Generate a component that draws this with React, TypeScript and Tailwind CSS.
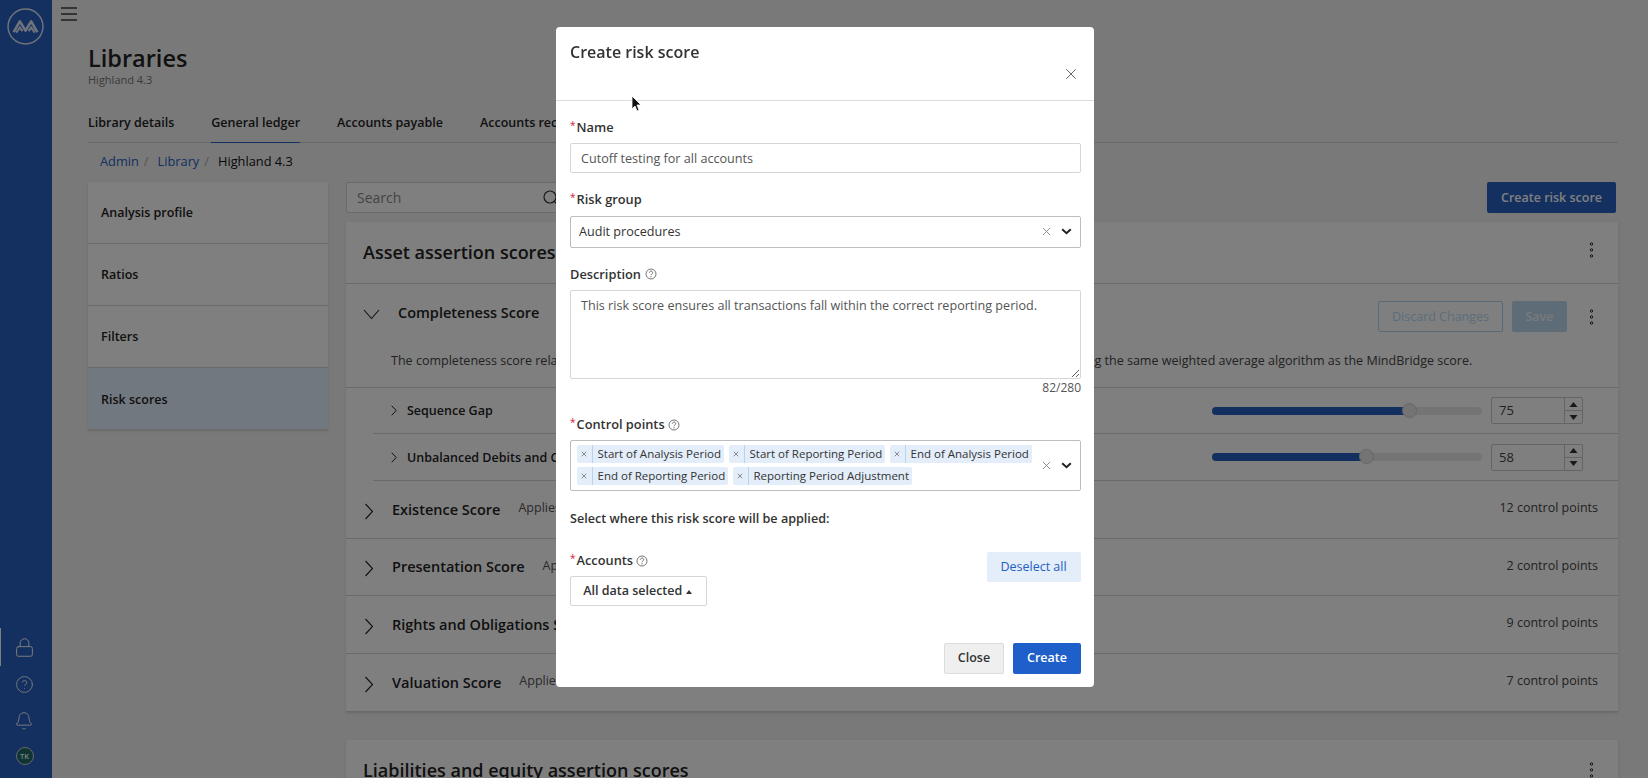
import React from "react";
import { Lock, CircleHelp, Bell, X } from "lucide-react";

const Chev = ({ dir, size }: { dir: "down" | "right"; size: "lg" | "sm" }) => {
  if (dir === "down")
    return (
      <svg width="17" height="11" viewBox="0 0 17 11" fill="none" stroke="#222" strokeWidth="1.1">
        <path d="M1 1l7.5 8.5L16 1" />
      </svg>
    );
  return size === "lg" ? (
    <svg width="10" height="17" viewBox="0 0 10 17" fill="none" stroke="#222" strokeWidth="1.1">
      <path d="M1.5 1l7 7.5-7 7.5" />
    </svg>
  ) : (
    <svg width="6" height="11" viewBox="0 0 6 11" fill="none" stroke="#222" strokeWidth="1">
      <path d="M.7 .7l4.5 4.8-4.5 4.8" />
    </svg>
  );
};

const Kebab = () => (
  <svg width="5" height="16" viewBox="0 0 5 16" fill="none" stroke="#222" strokeWidth="1">
    <circle cx="2.5" cy="2" r="1.2" />
    <circle cx="2.5" cy="8" r="1.2" />
    <circle cx="2.5" cy="14" r="1.2" />
  </svg>
);

const Help = () => (
  <svg width="12" height="12" viewBox="0 0 12 12" fill="none" stroke="#555" strokeWidth=".8">
    <circle cx="6" cy="6" r="5" />
    <path d="M4.4 4.7c0-2.1 3.3-2.1 3.3 0 0 1.2-1.7 1.2-1.7 2.6" />
    <circle cx="6" cy="8.9" r=".25" />
  </svg>
);

const Req = () => <span className="text-[#d4213d] text-[10px] font-normal relative top-[-3px] mr-[1px]">*</span>;

const SelectCtl = () => (
  <div className="flex items-center w-[41px] shrink-0">
    <X size={13} strokeWidth={1.5} className="text-[#777] ml-[1px]" />
    <svg width="11" height="7" viewBox="0 0 11 7" className="ml-[8px]" fill="none" stroke="#222" strokeWidth="2">
      <path d="M1.2 1.2l4.3 4 4.3-4" />
    </svg>
  </div>
);

const Chip = ({ t, w }: { t: string; w: string }) => (
  <div className={`flex h-[18px] items-stretch bg-[#e3eefa] rounded-[2px] text-[11.5px] leading-[18px] text-[#333] ${w}`}>
    <span className="w-[15.5px] shrink-0 border-r border-r-[#b9d3ee] flex items-center justify-center">
      <X size={8} strokeWidth={1.8} className="text-[#444]" />
    </span>
    <span className="pl-[5px] whitespace-nowrap">{t}</span>
  </div>
);

const Slider = ({ pct, value }: { pct: string; value: string }) => (
  <div className="flex items-center">
    <div className="relative w-[270px] h-[8px] rounded-full bg-[#e9e9e9]">
      <div className={`h-full rounded-l-full bg-[#265fbf] ${pct}`} />
      <div
        className="absolute top-[-4px] w-[15px] h-[15px] rounded-full bg-[#e8e8e8] border border-[#cfcfcf] ml-[-8px]"
        style={{ left: value === "75" ? "73.2%" : "57.5%" }}
      />
    </div>
    <div className="ml-[9px] flex w-[92px] h-[27px] border border-[#c8c8c8] rounded-[2px] bg-white text-[13px] text-[#444]">
      <div className="flex-1 pl-[7px] leading-[25px]">{value}</div>
      <div className="w-[18px] border-l border-[#c8c8c8] flex flex-col">
        <div className="flex-1 flex items-center justify-center border-b border-[#c8c8c8]">
          <svg width="9" height="5" viewBox="0 0 9 5"><path d="M.5 5L4.5 0l4 5z" fill="#333" /></svg>
        </div>
        <div className="flex-1 flex items-center justify-center">
          <svg width="9" height="5" viewBox="0 0 9 5"><path d="M.5 0h8l-4 5z" fill="#333" /></svg>
        </div>
      </div>
    </div>
  </div>
);

const ScoreRow = ({ name, h, pts }: { name: string; h: string; pts: string }) => (
  <div className={`flex items-center border-b border-[#d4d4d4] pl-[18px] pr-[20px] ${h}`}>
    <div className="w-[28px] flex pt-[3px]">
      <Chev dir="right" size="lg" />
    </div>
    <span className="text-[14.5px] font-semibold text-[#222] whitespace-nowrap">{name}</span>
    <span className="text-[12.5px] text-[#555] whitespace-nowrap ml-[18px] pb-[2px]">Applies to</span>
    <span className="ml-auto text-[12.5px] text-[#444] whitespace-nowrap pb-[2px]">{pts}</span>
  </div>
);

export default function App() {
  return (
    <div className="font-['Open_Sans',sans-serif] h-screen w-full overflow-hidden flex bg-[#f2f2f2] text-[#222] relative">
      {/* Sidebar */}
      <aside className="w-[52px] shrink-0 bg-[#2660c0] flex flex-col text-white">
        <div className="pt-[8px] pl-[7px]">
          <svg width="37" height="37" viewBox="0 0 36 36" fill="none">
            <circle cx="18" cy="18" r="17" stroke="#fff" strokeWidth="1.4" opacity=".85" />
            <path d="M6.5 23.5L12.5 13l5.5 9 5.5-9 6 10.5" stroke="#fff" strokeWidth="2.6" strokeLinejoin="round" opacity=".85" />
            <path d="M9 24l3.5-5 2.5 3.5M27 24l-3.5-5-2.5 3.5" stroke="#fff" strokeWidth="2" opacity=".85" />
          </svg>
        </div>
        <div className="mt-auto pb-[13px] flex flex-col items-center">
          <div className="relative w-full h-[38px] flex items-center justify-center pr-[4px] mt-[-1px]">
            <div className="absolute left-0 top-0 h-full w-[1px] bg-white" />
            <Lock size={21} strokeWidth={1.1} />
          </div>
          <div className="h-[36px] w-full flex items-center justify-center pr-[4px]">
            <CircleHelp size={19} strokeWidth={1.1} />
          </div>
          <div className="h-[36px] w-full flex items-center justify-center pr-[4px] pt-[1px]">
            <Bell size={20} strokeWidth={1.1} />
          </div>
          <div className="mt-[9px] mr-[3px] w-[18px] h-[18px] rounded-full bg-[#1d6b66] border border-[#cfcfcf] text-[7.5px] leading-[16px] text-center font-semibold">
            TK
          </div>
        </div>
      </aside>

      {/* Main */}
      <main className="flex-1 min-w-0">
        <div className="pl-[9px] pt-[7px] h-[42px]">
          <div className="w-[16px] flex flex-col gap-[4.5px]">
            <div className="h-[1.5px] bg-[#6b6b6b]" />
            <div className="h-[1.5px] bg-[#6b6b6b]" />
            <div className="h-[1.5px] bg-[#6b6b6b]" />
          </div>
        </div>
        <div className="pl-[36px] pr-[30px]">
          <h1 className="text-[23.5px] leading-[32px] font-semibold text-[#222] mb-[-1px]">Libraries</h1>
          <div className="text-[11px] leading-[14px] text-[#777]">Highland 4.3</div>

          <div className="mt-[19px] flex h-[37px] border-b border-[#d0d0d0] text-[12.5px] font-semibold text-[#222] gap-[37px] leading-[34px]">
            <div>Library details</div>
            <div className="border-b-[1px] border-[#2660c0] h-[37px]">General ledger</div>
            <div>Accounts payable</div>
            <div>Accounts receivable</div>
          </div>

          <div className="h-[39px] pl-[12px] pb-[2px] flex items-center text-[12.8px]">
            <span className="text-[#2660c0]">Admin</span>
            <span className="text-[#aaa] ml-[5px] mr-[9px]">/</span>
            <span className="text-[#2660c0]">Library</span>
            <span className="text-[#aaa] ml-[5px] mr-[9px]">/</span>
            <span className="text-[#111]">Highland 4.3</span>
          </div>

          <div className="flex gap-[18px]">
            {/* Left menu */}
            <div className="w-[240px] shrink-0 self-start bg-white shadow-sm text-[12.5px] font-semibold">
              {["Analysis profile", "Ratios", "Filters"].map((t) => (
                <div key={t} className="h-[62px] border-b border-[#d4d4d4] pl-[13px] flex items-center pt-[2px]">
                  {t}
                </div>
              ))}
              <div className="h-[62px] border-b border-[#d4d4d4] pl-[13px] pt-[4px] flex items-center bg-[#e4f0ff]">Risk scores</div>
            </div>

            {/* Right */}
            <div className="flex-1 min-w-0">
              <div className="flex justify-between pr-[2px] h-[31px]">
                <div className="w-[220px] h-[31px] bg-white border border-[#d4d4d4] rounded-[2px] flex items-center pl-[10px] pr-[6px] justify-between text-[14px] text-[#888]">
                  Search
                  <svg width="16" height="16" viewBox="0 0 16 16" fill="none" stroke="#333" strokeWidth="1.2">
                    <circle cx="7" cy="7" r="6" />
                    <path d="M11.5 11.5l4 4" />
                  </svg>
                </div>
                <div className="w-[129px] h-[31px] bg-[#2660c0] rounded-[2px] text-white text-[12.5px] font-semibold flex items-center justify-center pt-[1px]">
                  Create risk score
                </div>
              </div>

              <div className="mt-[9px] bg-white shadow-sm">
                <div className="h-[62px] border-b border-[#d4d4d4] flex items-center justify-between pl-[17px] pr-[24px]">
                  <span className="text-[18px] font-semibold">Asset assertion scores</span>
                  <span className="mt-[-6px] flex"><Kebab /></span>
                </div>
                <div className="h-[104px] border-b border-[#d4d4d4] relative">
                  <div className="flex items-center h-[65px] pl-[17px] pr-[24px]">
                    <div className="w-[35px] mt-[-4px]">
                      <Chev dir="down" size="lg" />
                    </div>
                    <span className="text-[14.5px] font-semibold mt-[-8px]">Completeness Score</span>
                    <div className="ml-auto h-[31px] w-[125px] border border-[#b0d4f0] rounded-[2px] text-[#b8dcf8] text-[12.5px] flex items-center justify-center pt-[1px]">
                      Discard Changes
                    </div>
                    <div className="ml-[9px] h-[31px] w-[55px] bg-[#bbd8ee] rounded-[2px] text-[#f0f5fb] text-[12.5px] font-semibold flex items-center justify-center pt-[1px]">
                      Save
                    </div>
                    <div className="ml-[22px]">
                      <Kebab />
                    </div>
                  </div>
                  <div className="pl-[45px] text-[12.54px] leading-[18px] text-[#444] whitespace-nowrap overflow-hidden pt-[3px]">
                    The completeness score relates to whether all transactions which should be present have been recorded, calculated using the same weighted average algorithm as the MindBridge score.
                  </div>
                </div>
                <div className="ml-[27px]">
                  <div className="h-[46px] border-b border-[#d4d4d4] flex items-center pl-[18px] pr-[35px]">
                    <div className="w-[16px] flex">
                      <Chev dir="right" size="sm" />
                    </div>
                    <span className="text-[12.5px] font-semibold pt-[2px]">Sequence Gap</span>
                    <div className="ml-auto">
                      <Slider pct="w-[73%]" value="75" />
                    </div>
                  </div>
                  <div className="h-[47px] border-b border-[#d4d4d4] flex items-center pl-[18px] pr-[35px]">
                    <div className="w-[16px] flex">
                      <Chev dir="right" size="sm" />
                    </div>
                    <span className="text-[12.5px] font-semibold pt-[2px]">Unbalanced Debits and Credits</span>
                    <div className="ml-auto">
                      <Slider pct="w-[57.5%]" value="58" />
                    </div>
                  </div>
                </div>
                <ScoreRow name="Existence Score" h="h-[58px]" pts="12 control points" />
                <ScoreRow name="Presentation Score" h="h-[57px]" pts="2 control points" />
                <ScoreRow name="Rights and Obligations Score" h="h-[58px]" pts="9 control points" />
                <ScoreRow name="Valuation Score" h="h-[58px]" pts="7 control points" />
              </div>

              <div className="mt-[28px] h-[62px] bg-white shadow-sm flex items-center justify-between pl-[17px] pr-[24px] pb-[2px]">
                <span className="text-[18px] font-semibold">Liabilities and equity assertion scores</span>
                <Kebab />
              </div>
            </div>
          </div>
        </div>
      </main>

      {/* Overlay and modal */}
      <div className="fixed inset-0 bg-black/50 flex justify-center pl-[2px] pt-[27px]">
        <div className="w-[538px] h-[660px] bg-white rounded-[4px] text-[#222]">
          <div className="h-[73.5px] border-b border-[#dcdcdc] pl-[14px] pr-[17px] pt-[13px] relative">
            <div className="text-[16px] leading-[24px] font-semibold text-[#333]">Create risk score</div>
            <X size={18} strokeWidth={1} className="absolute right-[14px] top-[38px] text-[#333]" />
          </div>
          <div className="pl-[14px] pr-[13px] pt-[17px]">
            <div className="h-[18px] leading-[18px] text-[12.8px] font-semibold text-[#333] mb-[7px]">
              <Req />Name
            </div>
            <input
              readOnly
              value="Cutoff testing for all accounts"
              className="block w-full h-[30px] border border-[#d6d6d6] rounded-[2px] px-[10px] pt-[2px] text-[12.6px] text-[#555] outline-none"
            />
            <div className="h-[18px] leading-[18px] text-[12.8px] font-semibold text-[#333] mt-[17px] mb-[8px]">
              <Req />Risk group
            </div>
            <div className="h-[32px] border border-[#bdbdbd] rounded-[2px] flex items-center justify-between pl-[8px] text-[12.6px] text-[#333]">
              <span className="pt-[2px]">Audit procedures</span>
              <SelectCtl />
            </div>
            <div className="h-[18px] leading-[18px] text-[12.8px] font-semibold text-[#333] mt-[17px] mb-[7px] flex items-center gap-[4px]">
              Description <Help />
            </div>
            <textarea
              readOnly
              value="This risk score ensures all transactions fall within the correct reporting period."
              className="block w-full h-[89px] border border-[#d6d6d6] rounded-[2px] px-[10px] pt-[6px] pb-[4px] text-[12.6px] leading-[18px] text-[#555] outline-none"
            />
            <div className="h-[18px] leading-[18px] text-[12px] text-[#555] text-right">82/280</div>
            <div className="h-[18px] leading-[18px] text-[12.8px] font-semibold text-[#333] mt-[19px] mb-[6px] flex items-center">
              <span><Req />Control points</span>
              <span className="ml-[3px] flex"><Help /></span>
            </div>
            <div className="h-[51px] border border-[#bdbdbd] rounded-[2px] flex items-center pl-[6px]">
              <div className="flex-1 flex flex-wrap gap-x-[5px] gap-y-[4px]">
                <Chip t="Start of Analysis Period" w="w-[147px]" />
                <Chip t="Start of Reporting Period" w="w-[156px]" />
                <Chip t="End of Analysis Period" w="w-[142px]" />
                <Chip t="End of Reporting Period" w="w-[151px]" />
                <Chip t="Reporting Period Adjustment" w="w-[179px]" />
              </div>
              <SelectCtl />
            </div>
            <div className="h-[18px] leading-[18px] text-[12.6px] font-semibold text-[#333] mt-[19px]">
              Select where this risk score will be applied:
            </div>
            <div className="mt-[24px] flex justify-between items-start">
              <div>
                <div className="h-[18px] leading-[18px] text-[12.8px] font-semibold text-[#333] mb-[6px] flex items-center">
                  <span><Req />Accounts</span>
                  <span className="ml-[3px] flex"><Help /></span>
                </div>
                <div className="w-[136.5px] h-[30.5px] border border-[#d6d6d6] rounded-[2px] flex items-center justify-center gap-[4px] text-[12.5px] font-semibold text-[#333] pt-[2px] pr-[1px]">
                  All data selected
                  <svg width="6" height="4" viewBox="0 0 6 4"><path d="M0 4l3-4 3 4z" fill="#333" /></svg>
                </div>
              </div>
              <div className="w-[94px] h-[30.5px] bg-[#e3eefa] rounded-[2px] text-[#2360c4] text-[12.5px] flex items-center justify-center pt-[2px] pr-[1px]">
                Deselect all
              </div>
            </div>
            <div className="mt-[37px] flex justify-end gap-[9px] text-[12.5px] font-semibold">
              <div className="w-[60px] h-[30.5px] bg-[#efefef] border border-[#dcdcdc] rounded-[2px] flex items-center justify-center text-[#333]">
                Close
              </div>
              <div className="w-[68px] h-[30.5px] bg-[#1f5fc9] rounded-[2px] flex items-center justify-center text-white">
                Create
              </div>
            </div>
          </div>
        </div>
        {/* Mouse pointer */}
        <svg className="absolute left-[631px] top-[95px]" width="12" height="18" viewBox="0 0 12 18">
          <path d="M1 1v13l3-3 2 5 2-1-2-5h4z" fill="#111" stroke="#fff" strokeWidth=".8" />
        </svg>
      </div>
    </div>
  );
}
